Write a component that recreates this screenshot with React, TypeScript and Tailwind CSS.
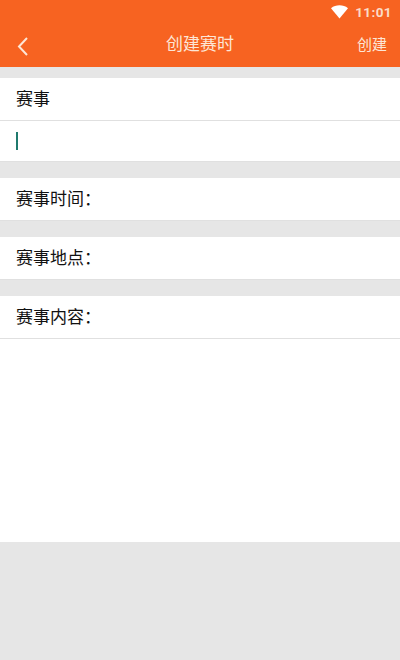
const cjk = "font-['Noto_Sans_CJK_SC','Liberation_Sans',sans-serif]"

function Row({ label }: { label: string }) {
  return (
    <div className="h-[43px] flex items-center pl-4 pb-[3px] bg-white border-b border-[#e0e0e0] text-[17px] leading-none text-[#111111]">
      {label}
    </div>
  )
}

export default function App() {
  return (
    <div className={`w-[400px] h-[660px] flex flex-col bg-[#e6e6e6] overflow-hidden ${cjk}`}>
      {/* 顶部栏 */}
      <div className="h-[67px] bg-[#f76321] flex flex-col text-[#fde6d6]">
        <div className="h-[24px] flex items-center justify-end pr-2 gap-[6px]">
          <svg width="19" height="14" viewBox="0 0 18 14">
            <path d="M0.5 3.2C3 1.2 5.8 0.3 9 0.3s6 0.9 8.5 2.9L9 13.6z" fill="#ffffff" />
          </svg>
          <span className="font-['Roboto',sans-serif] font-bold text-[13.5px] tracking-[0.4px] text-[#fbdcc8]">11:01</span>
        </div>
        <div className="flex-1 flex items-center justify-between pl-[17px] pr-[13px] relative">
          <svg className="mt-[1px]" width="11" height="19" viewBox="0 0 11 19" fill="none">
            <path d="M10 1L2 9.5L10 18" stroke="#fde6d6" strokeWidth="2" />
          </svg>
          <span className="absolute left-0 right-0 mb-[7px] text-center text-[17px] leading-none pointer-events-none">创建赛时</span>
          <span className="mb-[5px] text-[15px] leading-none">创建</span>
        </div>
      </div>

      <div className="h-[11px]" />

      {/* 赛事 */}
      <Row label="赛事" />
      <div className="h-[41px] bg-white border-b border-[#e0e0e0] flex items-center pl-4">
        <div className="w-[2px] h-[18px] bg-[#1f7a6e]" />
      </div>

      <div className="h-[16px]" />
      <Row label="赛事时间：" />
      <div className="h-[16px]" />
      <Row label="赛事地点：" />
      <div className="h-[16px]" />

      {/* 内容 */}
      <div className="h-[246px] bg-white flex flex-col">
        <Row label="赛事内容：" />
      </div>
    </div>
  )
}
